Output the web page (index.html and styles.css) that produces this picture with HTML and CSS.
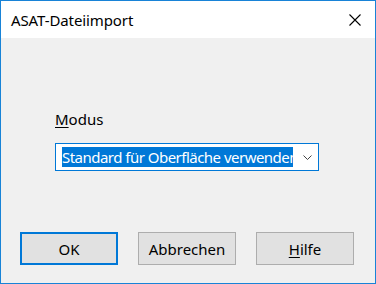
FILE: index.html
```html
<!DOCTYPE html>
<html lang="de">
<head>
<meta charset="UTF-8">
<title>ASAT-Dateiimport</title>
<link rel="stylesheet" href="styles.css">
</head>
<body>
<div class="dialog">
  <div class="titlebar">
    <span class="title">ASAT-Dateiimport</span>
    <svg class="close" width="12" height="12" viewBox="0 0 12 12"><path d="M0.5 0.5L11.5 11.5M11.5 0.5L0.5 11.5" stroke="#000" stroke-width="1.1" fill="none"/></svg>
  </div>
  <div class="body">
    <div class="field">
      <div class="label"><u>M</u>odus</div>
      <div class="combo">
        <span class="value">Standard für Oberfläche verwenden</span>
        <svg class="chevron" width="9" height="5" viewBox="0 0 9 5"><path d="M0.5 0.5L4.5 4.5L8.5 0.5" stroke="#444" stroke-width="1" fill="none"/></svg>
      </div>
    </div>
    <div class="buttons">
      <div class="btn default">OK</div>
      <div class="btn">Abbrechen</div>
      <div class="btn"><u>H</u>ilfe</div>
    </div>
  </div>
</div>
</body>
</html>
```

FILE: styles.css
```css
html,body{margin:0;padding:0}
body{width:376px;height:284px;font-family:"Noto Sans","Liberation Sans",sans-serif;color:#000}
.dialog{box-sizing:border-box;width:376px;height:284px;border:1px solid #1883d7;display:flex;flex-direction:column;background:#f0f0f0}
.titlebar{height:37px;background:#fff;display:flex;align-items:center;justify-content:space-between;padding:0 14px 0 10px}
.title{font-size:15px;line-height:20px;letter-spacing:-0.1px}
.close{display:block}
.body{flex:1;display:flex;flex-direction:column;justify-content:space-between;padding:0 0 18px 19px}
.field{padding:71px 0 0 35px}
.label{font-size:15px;line-height:20px}
.label u,.btn u{text-decoration-thickness:1px;text-underline-offset:2px}
.combo{box-sizing:border-box;width:264px;height:28px;margin-top:14px;border:1px solid #0078d7;background:#fff;display:flex;align-items:center;padding:0 6px;gap:10px}
.value{display:block;white-space:nowrap;overflow:hidden;width:233px;height:20px;line-height:20px;font-size:15px;letter-spacing:-0.52px;background:#0078d7;color:#fff}
.chevron{display:block;flex:none}
.buttons{display:flex;gap:20px}
.btn{box-sizing:border-box;width:98px;height:33px;border:1px solid #adadad;background:#e1e1e1;display:flex;align-items:center;justify-content:center;font-size:15px}
.btn.default{border:2px solid #0078d7}
```
